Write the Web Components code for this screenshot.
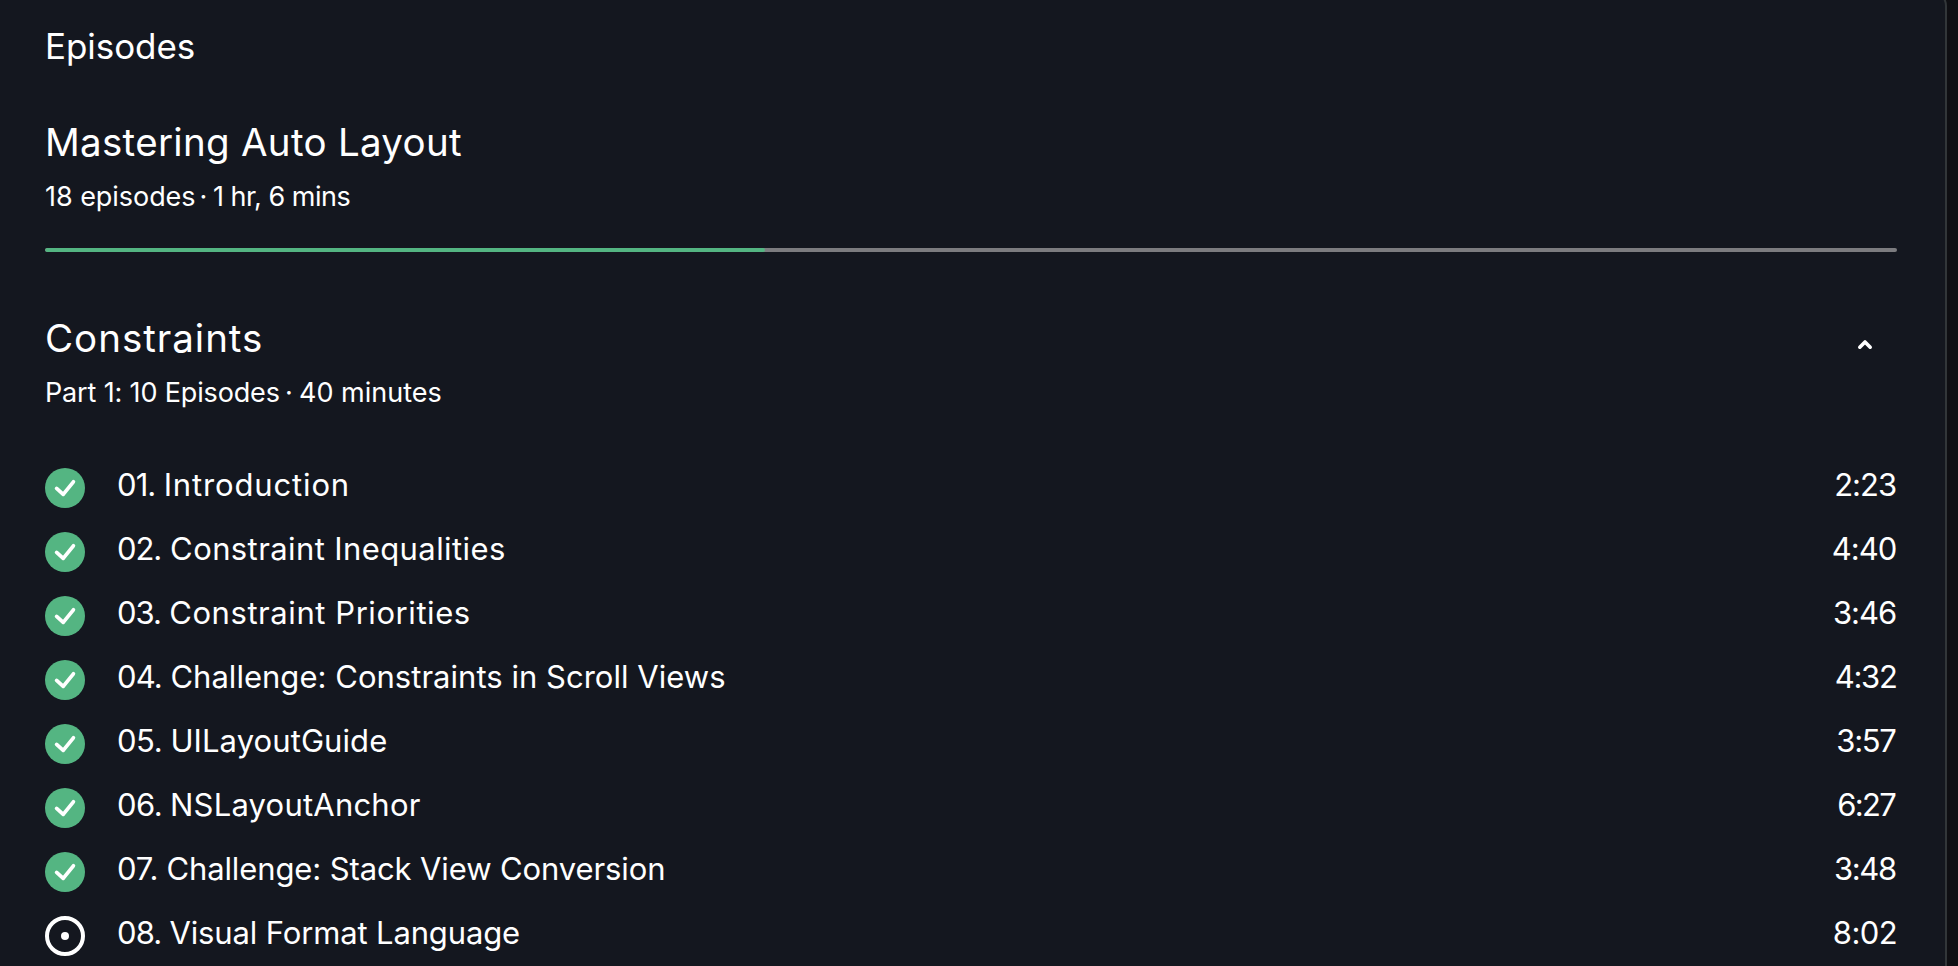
<!DOCTYPE html>
<html lang="en">
<head>
<meta charset="utf-8">
<title>Episodes</title>
<style>
  html, body { margin: 0; height: 100%; overflow: hidden; background: #0f0f13; }
  body { font-family: Inter, "Liberation Sans", sans-serif; color: #fff; }
</style>
</head>
<body>
<episode-panel>
  <panel-title>Episodes</panel-title>
  <course-heading spacing="0.3">Mastering Auto Layout
    <tracked-text slot="meta" ls="-0.05" at="0">18 episodes</tracked-text>
    <tracked-text slot="meta" at="154.5">·</tracked-text>
    <tracked-text slot="meta" ls="-0.49" at="168">1 hr, 6 mins</tracked-text>
  </course-heading>
  <progress-line style="--done:720px"></progress-line>
  <course-heading spacing="0.98" collapsible>Constraints
    <tracked-text slot="meta" ls="-0.15" at="0">Part 1: 10 Episodes</tracked-text>
    <tracked-text slot="meta" at="240">·</tracked-text>
    <tracked-text slot="meta" ls="0.0" at="254">40 minutes</tracked-text>
  </course-heading>
  <episode-list></episode-list>
</episode-panel>

<script>
const define = (name, html, setup) => {
  const template = document.createElement('template');
  template.innerHTML = html;
  customElements.define(name, class extends HTMLElement {
    connectedCallback() {
      if (this.shadowRoot) return;
      const root = this.attachShadow({ mode: 'open' });
      root.append(template.content.cloneNode(true));
      if (setup) setup(this, root);
    }
  });
};

define('episode-panel', `
  <style>
    :host { display: block; box-sizing: border-box; width: 1947px; height: 976px; margin-top: -10px;
      padding: 32px 48px 0 45px; background: #14171f; border-top: 2px solid #323639;
      border-right: 2px solid #323639; border-top-right-radius: 16px; overflow: hidden; }
  </style><slot></slot>`);

define('panel-title', `
  <style>:host { display: block; font-size: 35px; line-height: 44px; letter-spacing: -.06px; margin-bottom: 50px; }</style>
  <slot></slot>`);

define('tracked-text', `
  <style>:host { display: block; grid-area: 1 / 1; white-space: nowrap; }</style><slot></slot>`,
  host => {
    host.style.letterSpacing = (host.getAttribute('ls') || 0) + 'px';
    host.style.marginLeft = (host.getAttribute('at') || 0) + 'px';
  });

define('course-heading', `
  <style>
    :host { display: flex; justify-content: space-between; align-items: flex-start; }
    .title { font-size: 38.5px; line-height: 48px; margin-bottom: 15px; white-space: nowrap; }
    .meta { display: grid; justify-items: start; font-size: 27px; line-height: 32px; }
    svg { display: none; margin: 20px 24px 0 0; }
    :host([collapsible]) svg { display: block; }
  </style>
  <div><div class="title"><slot></slot></div><div class="meta"><slot name="meta"></slot></div></div>
  <svg width="20" height="20" viewBox="0 0 20 20" fill="none" stroke="#fff" stroke-width="3.6" stroke-linecap="round" stroke-linejoin="round"><path d="M6.8 13.2 12 8l5.2 5.2"/></svg>`,
  (host, root) => { root.querySelector('.title').style.letterSpacing = host.getAttribute('spacing') + 'px'; });

define('progress-line', `
  <style>
    :host { display: block; height: 4px; margin: 35px 0 62px; border-radius: 2px; background: #7c7c7f; overflow: hidden; width: 1852px; }
    div { height: 4px; width: var(--done); background: #54b582; border-radius: 2px; }
  </style><div></div>`);

define('status-icon', `
  <style>
    :host { display: block; width: 40px; height: 40px; }
    svg { display: block; }
    :host([state="done"]) .now, :host([state="current"]) .done { display: none; }
  </style>
  <svg width="40" height="40" viewBox="0 0 40 40" fill="none">
    <g class="done"><circle cx="20" cy="20" r="20" fill="#54b582"/><path d="M11.6 20.4 18.2 26.4 28.4 13.8" stroke="#fff" stroke-width="3.7" stroke-linecap="round" stroke-linejoin="round"/></g>
    <g class="now"><circle cx="20" cy="20" r="18" stroke="#fff" stroke-width="4"/><circle cx="20" cy="20" r="4" fill="#fff"/></g>
  </svg>`);

define('episode-row', `
  <style>
    :host { display: grid; grid-template-columns: 72px var(--number) 1fr auto; height: 64px; font-size: 31px; line-height: 58px; white-space: nowrap; }
    status-icon { margin-top: 12px; }
  </style>
  <status-icon></status-icon>
  <span class="n"></span><span class="t"></span><span class="d"></span>`,
  (host, root) => {
    const [n, nls, start, t, tls, d, dls, dm] = host.data;
    host.style.setProperty('--number', (start - 117.3) + 'px');
    root.querySelector('status-icon').setAttribute('state', n === '08.' ? 'current' : 'done');
    const put = (c, text, ls) => { const e = root.querySelector(c); e.textContent = text; e.style.letterSpacing = ls + 'px'; return e; };
    put('.n', n, nls); put('.t', t, tls); put('.d', d, dls).style.marginRight = dm + 'px';
  });

// number, tracking, title start, title, tracking, duration, tracking, right inset
const episodes = [
  ['01.', -0.9, 164, 'Introduction', 0.85, '2:23', -1.0, 0.93],
  ['02.', -1.1, 170.4, 'Constraint Inequalities', 0.401, '4:40', -0.994, 0.6],
  ['03.', -1.0, 169.5, 'Constraint Priorities', 0.57, '3:46', -1.035, 0.81],
  ['04.', -0.919, 170.7, 'Challenge: Constraints in Scroll Views', 0.027, '4:32', -1.3, 0.46],
  ['05.', -0.435, 170.7, 'UILayoutGuide', 0.092, '3:57', -1.308, 1.4],
  ['06.', -0.518, 170.3, 'NSLayoutAnchor', 0.213, '6:27', -1.7, 1.9],
  ['07.', -0.11, 166.7, 'Challenge: Stack View Conversion', -0.11, '3:48', -1.368, 1.19],
  ['08.', -0.9, 169.8, 'Visual Format Language', -0.14, '8:02', -0.555, -0.2],
];
define('episode-list', `<style>:host { display: block; margin-top: 47px; }</style>`,
  (host, root) => episodes.forEach(data => {
    const row = document.createElement('episode-row');
    row.data = data;
    root.append(row);
  }));
</script>
</body>
</html>
